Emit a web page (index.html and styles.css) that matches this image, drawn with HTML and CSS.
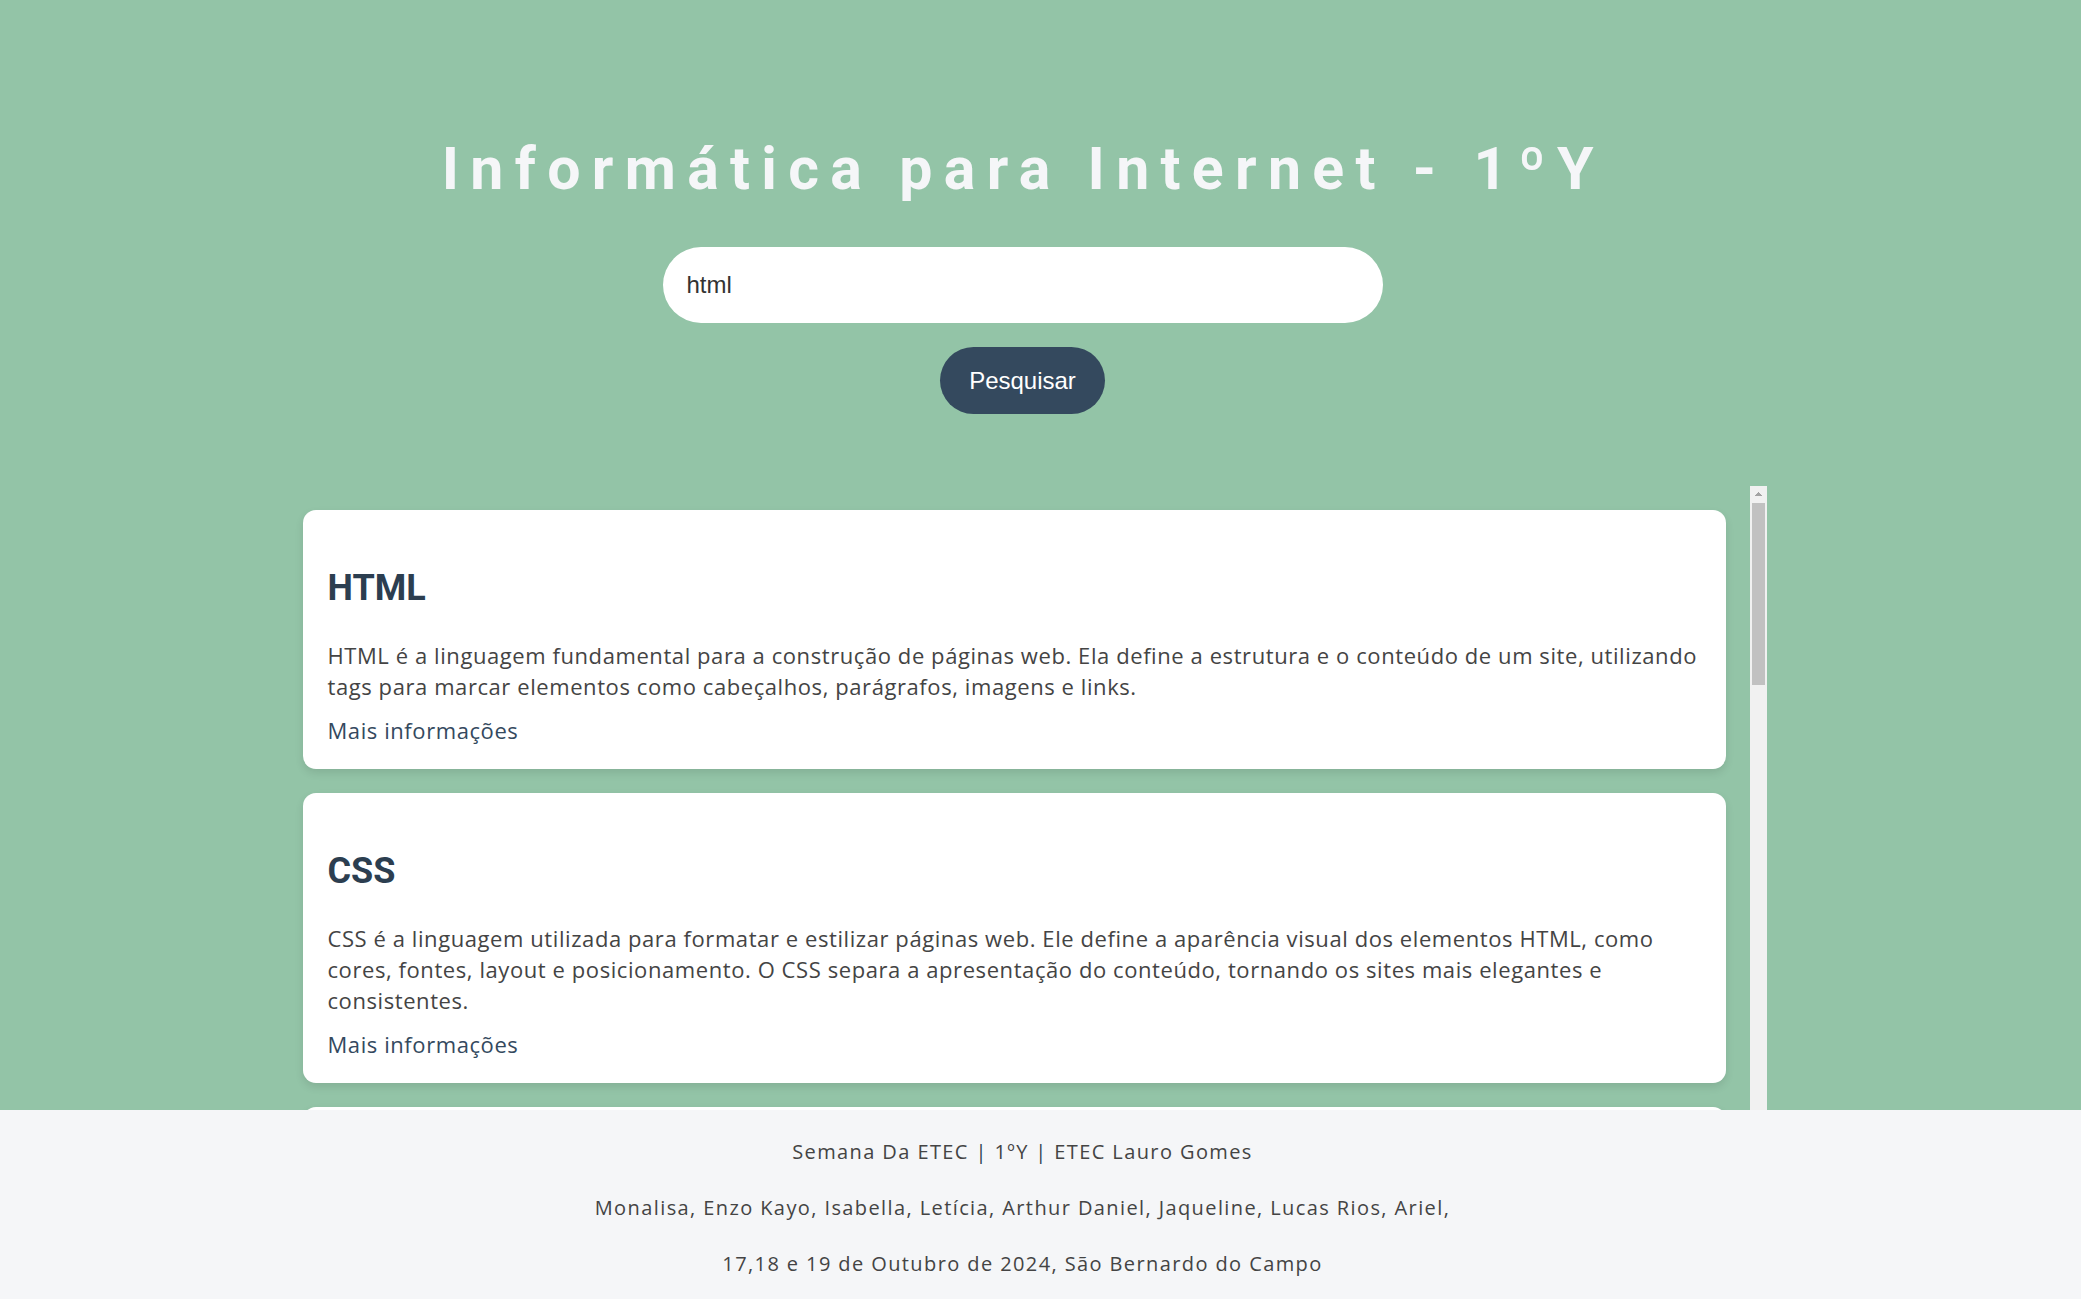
FILE: index.html
```html
<!DOCTYPE html>
<html lang="pt-BR">
<head>
<meta charset="utf-8">
<title>Informática para Internet - 1ºY</title>
<link rel="stylesheet" href="styles.css">
</head>
<body>
<div class="page">
  <header class="hero">
    <h1 class="title">Informática para Internet - 1ºY</h1>
    <form class="search">
      <input class="search-input" type="text" value="html">
      <button class="search-btn" type="button">Pesquisar</button>
    </form>
  </header>

  <div class="results-frame">
    <main class="results">
      <section class="card">
        <h2 class="card-title">HTML</h2>
        <p class="card-text">HTML é a linguagem fundamental para a construção de páginas web. Ela define a estrutura e o conteúdo de um site, utilizando tags para marcar elementos como cabeçalhos, parágrafos, imagens e links.</p>
        <a class="card-link" href="#">Mais informações</a>
      </section>
      <section class="card">
        <h2 class="card-title">CSS</h2>
        <p class="card-text">CSS é a linguagem utilizada para formatar e estilizar páginas web. Ele define a aparência visual dos elementos HTML, como cores, fontes, layout e posicionamento. O CSS separa a apresentação do conteúdo, tornando os sites mais elegantes e consistentes.</p>
        <a class="card-link" href="#">Mais informações</a>
      </section>
      <section class="card">
        <h2 class="card-title">JavaScript</h2>
        <p class="card-text">JavaScript é a linguagem de programação que torna as páginas web interativas. Com ela é possível criar animações, validar formulários, manipular elementos da página e responder às ações do usuário.</p>
        <a class="card-link" href="#">Mais informações</a>
      </section>
    </main>
    <div class="scrollbar" aria-hidden="true">
      <span class="scroll-arrow"></span>
      <span class="scroll-thumb"></span>
    </div>
  </div>
</div>

<footer class="footer">
  <p class="footer-line">Semana Da ETEC <span class="sep">|</span> 1ºY <span class="sep">|</span> ETEC Lauro Gomes</p>
  <p class="footer-line">Monalisa, Enzo Kayo, Isabella, Letícia, Arthur Daniel, Jaqueline, Lucas Rios, Ariel,</p>
  <p class="footer-line">17,18 e 19 de Outubro de 2024, São Bernardo do Campo</p>
</footer>
</body>
</html>
```
FILE: styles.css
```css
* {
  box-sizing: border-box;
}

html, body {
  margin: 0;
  padding: 0;
}

body {
  background: #93c4a7;
  font-family: "Open Sans", "Noto Sans", sans-serif;
  color: #444;
  overflow: hidden;
}

.page {
  padding-right: 36px;
}

.hero {
  display: flex;
  flex-direction: column;
  align-items: center;
  padding-top: 134px;
}

.title {
  margin: 0 0 43px 0;
  font-family: Roboto, sans-serif;
  font-weight: 700;
  font-size: 59px;
  line-height: 70px;
  letter-spacing: 11.33px;
  color: #f5f6f8;
  padding-left: 1.5px;
}

.search {
  display: flex;
  flex-direction: column;
  align-items: center;
  gap: 24px;
}

.search-input {
  width: 720px;
  height: 76px;
  border: none;
  outline: none;
  border-radius: 38px;
  background: #ffffff;
  padding: 0 24px;
  font-family: "Liberation Sans", Arial, sans-serif;
  font-size: 24px;
  color: #333;
}

.search-btn {
  height: 67px;
  padding: 0 29px;
  border: none;
  border-radius: 34px;
  background: #34495e;
  color: #ffffff;
  font-family: "Liberation Sans", Arial, sans-serif;
  font-size: 24px;
}

.results-frame {
  display: flex;
  width: 1488px;
  height: 813px;
  margin: 72px auto 0 auto;
}

.results {
  flex: 1;
  min-width: 0;
  overflow: hidden;
  padding: 24px;
  display: flex;
  flex-direction: column;
  gap: 24px;
}

.scrollbar {
  flex: none;
  width: 17px;
  background: #f1f1f1;
  display: flex;
  flex-direction: column;
  align-items: center;
}

.scroll-arrow {
  width: 17px;
  height: 17px;
  background-image: conic-gradient(from 135deg at 50% 0, #a3a3a3 0deg 90deg, transparent 90deg);
  background-size: 8px 4px;
  background-position: 4.5px 6px;
  background-repeat: no-repeat;
}

.scroll-thumb {
  width: 13px;
  height: 182px;
  background: #c1c1c1;
}

.card {
  flex: none;
  background: #ffffff;
  border-radius: 13px;
  padding: 25px 25px 23px 25px;
  box-shadow: 0 4px 8px rgba(0, 0, 0, 0.1);
}

.card-title {
  margin: 32px 0 31px 0;
  font-family: Roboto, sans-serif;
  font-size: 36px;
  line-height: 42px;
  font-weight: 700;
  color: #2c3e50;
}

.card-text {
  margin: 0 0 13px 0;
  font-size: 22px;
  line-height: 31px;
  letter-spacing: 0.58px;
  color: #444;
}

.card-link {
  display: block;
  font-size: 22px;
  line-height: 31px;
  letter-spacing: 0.58px;
  color: #34495e;
  text-decoration: none;
}

.footer {
  position: fixed;
  left: 0;
  right: 0;
  bottom: 0;
  height: 189px;
  background: #f5f6f8;
  padding: 1px 36px 0 0;
  text-align: center;
}

.footer-line {
  margin: 25px 0;
  font-size: 20px;
  line-height: 31px;
  letter-spacing: 1.4px;
  color: #444;
}

.footer-line:last-child {
  margin-bottom: 0;
}

.sep {
  color: #2c3e50;
}
```
